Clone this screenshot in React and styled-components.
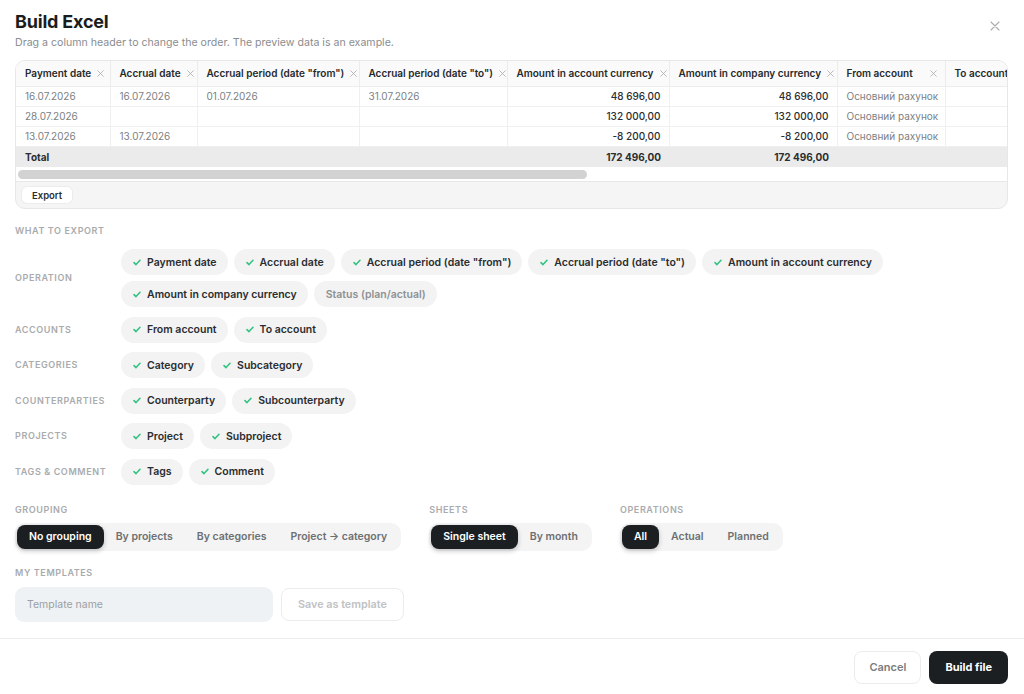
import React from "react";
import styled, { createGlobalStyle } from "styled-components";

const GlobalStyle = createGlobalStyle`
  html, body { margin: 0; padding: 0; background: #fff; }
  body { font-family: Inter, "Noto Sans", "Liberation Sans", sans-serif; color: #1c1f22; }
  * { box-sizing: border-box; }
`;

const columns = [
  { title: "Payment date", w: 94 },
  { title: "Accrual date", w: 87 },
  { title: 'Accrual period (date "from")', w: 162 },
  { title: 'Accrual period (date "to")', w: 148 },
  { title: "Amount in account currency", w: 162, num: true },
  { title: "Amount in company currency", w: 168, num: true },
  { title: "From account", w: 108 },
  { title: "To account", w: 120 },
];

const tableWidth = columns.reduce((s, c) => s + c.w, 0);

const rows = [
  ["16.07.2026", "16.07.2026", "01.07.2026", "31.07.2026", "48 696,00", "48 696,00", "Основний рахунок", ""],
  ["28.07.2026", "", "", "", "132 000,00", "132 000,00", "Основний рахунок", ""],
  ["13.07.2026", "13.07.2026", "", "", "-8 200,00", "-8 200,00", "Основний рахунок", ""],
];

const totals = ["Total", "", "", "", "172 496,00", "172 496,00", "", ""];

const groups = [
  {
    label: "Operation",
    chips: [
      ["Payment date", true],
      ["Accrual date", true],
      ['Accrual period (date "from")', true],
      ['Accrual period (date "to")', true],
      ["Amount in account currency", true],
      ["Amount in company currency", true],
      ["Status (plan/actual)", false],
    ],
  },
  { label: "Accounts", chips: [["From account", true], ["To account", true]] },
  { label: "Categories", chips: [["Category", true], ["Subcategory", true]] },
  { label: "Counterparties", chips: [["Counterparty", true], ["Subcounterparty", true]] },
  { label: "Projects", chips: [["Project", true], ["Subproject", true]] },
  { label: "Tags & comment", chips: [["Tags", true], ["Comment", true]] },
];

const Modal = styled.div`
  width: 1024px;
  height: 694px;
  display: flex;
  flex-direction: column;
  background: #fff;
  overflow: hidden;
`;

const Body = styled.div`
  padding: 11px 16px 0 15px;
  display: flex;
  flex-direction: column;
`;

const TitleRow = styled.div`
  display: flex;
  justify-content: space-between;
  align-items: flex-start;
`;

const Title = styled.h1`
  margin: 0;
  font-size: 18px;
  line-height: 22px;
  font-weight: 700;
  letter-spacing: -0.2px;
  color: #1a1d20;
`;

const Subtitle = styled.p`
  margin: 3px 0 0;
  font-size: 10.6px;
  line-height: 14px;
  color: #8a8d90;
`;

const CloseBtn = styled.button`
  border: 0;
  background: none;
  padding: 0;
  margin: 10px 8px 0 0;
  width: 10px;
  height: 10px;
  display: flex;
  color: #ababab;
`;

const TableCard = styled.div`
  margin-top: 10px;
  border: 1px solid #e7e7e7;
  border-radius: 10px;
  overflow: hidden;
  background: #f5f5f5;
`;

const TableClip = styled.div`
  overflow: hidden;
  background: #fff;
`;

const Table = styled.table`
  border-collapse: collapse;
  table-layout: fixed;
  font-size: 10px;
`;

const Th = styled.th`
  height: 25px;
  padding: 0 8px 0 9px;
  background: #fafafa;
  border-right: 1px solid #ececec;
  border-bottom: 1px solid #ececec;
  font-weight: 600;
  text-align: left;
  color: #26292c;
  white-space: nowrap;
  overflow: hidden;
`;

const ThInner = styled.div`
  display: flex;
  align-items: center;
  justify-content: space-between;
  gap: 6px;
`;

const Td = styled.td`
  height: 20px;
  padding: 0 8px 0 9px;
  border-right: 1px solid #f0f0f0;
  border-bottom: 1px solid #f0f0f0;
  white-space: nowrap;
  overflow: hidden;
  text-align: ${(p) => (p.$num ? "right" : "left")};
  color: ${(p) => (p.$num ? "#2b2e31" : "#7c7f82")};
  font-weight: ${(p) => (p.$num ? 500 : 400)};
`;

const TotalTd = styled.td`
  height: 21px;
  padding: 0 8px 0 9px;
  background: #ebebeb;
  font-weight: 700;
  color: #2b2e31;
  white-space: nowrap;
  text-align: ${(p) => (p.$num ? "right" : "left")};
`;

const ScrollTrack = styled.div`
  height: 15px;
  padding: 3px 2px;
  background: #fff;
  border-bottom: 1px solid #e8e8e8;
`;

const Thumb = styled.div`
  width: 569px;
  height: 9px;
  border-radius: 5px;
  background: #d2d2d2;
`;

const TableFooter = styled.div`
  height: 26px;
  padding: 4px 6px;
  display: flex;
  align-items: center;
`;

const SmallBtn = styled.button`
  height: 16px;
  padding: 0 10px;
  border: 0;
  border-radius: 5px;
  background: #fff;
  box-shadow: 0 0 0 1px #ececec;
  font: 600 9.5px Inter, sans-serif;
  color: #2b2e31;
`;

const SectionLabel = styled.div`
  font-size: 9px;
  line-height: 12px;
  font-weight: 600;
  letter-spacing: 0.6px;
  text-transform: uppercase;
  color: #a9abad;
`;

const ExportHead = styled(SectionLabel)`
  margin-top: 16px;
`;

const GroupList = styled.div`
  margin-top: 12px;
  display: flex;
  flex-direction: column;
  gap: 9.5px;
`;

const GroupRow = styled.div`
  display: grid;
  grid-template-columns: 106px 1fr;
  align-items: center;
`;

const ChipWrap = styled.div`
  display: flex;
  flex-wrap: wrap;
  gap: 6px;
`;

const Chip = styled.button`
  height: 26px;
  padding: 0 11px 0 12px;
  border: 0;
  border-radius: 13px;
  background: #f3f3f3;
  display: flex;
  align-items: center;
  gap: 6px;
  font: 600 10.5px Inter, sans-serif;
  color: ${(p) => (p.$on ? "#2a2d30" : "#8e9194")};
`;

const ModesRow = styled.div`
  margin-top: 19px;
  display: flex;
  gap: 28px;
`;

const ModeBlock = styled.div`
  display: flex;
  flex-direction: column;
  gap: 7px;
`;

const Segmented = styled.div`
  display: flex;
  padding: 2px;
  border-radius: 10px;
  background: #f4f4f4;
`;

const Segment = styled.button`
  height: 24px;
  padding: 0 12px;
  border: 0;
  border-radius: 8px;
  font: 600 10.5px Inter, sans-serif;
  background: ${(p) => (p.$active ? "#1b1f22" : "transparent")};
  color: ${(p) => (p.$active ? "#fff" : "#6d7073")};
  box-shadow: ${(p) => (p.$active ? "0 2px 5px rgba(0,0,0,0.22)" : "none")};
`;

const TemplatesHead = styled(SectionLabel)`
  margin-top: 16px;
`;

const TemplateRow = styled.div`
  margin-top: 8px;
  display: flex;
  align-items: center;
  gap: 8px;
`;

const TemplateInput = styled.input`
  width: 258px;
  height: 35px;
  padding: 0 12px;
  border: 0;
  border-radius: 9px;
  background: #eef2f4;
  font: 400 10.5px Inter, sans-serif;
  outline: none;
  &::placeholder { color: #9c9fa2; }
`;

const GhostBtn = styled.button`
  height: 33px;
  padding: 0 ${(p) => (p.$wide ? 16 : 14)}px;
  border: 1px solid #ececec;
  border-radius: 8px;
  background: #fff;
  font: 600 ${(p) => (p.$wide ? 10.8 : 11)}px Inter, sans-serif;
  color: ${(p) => (p.$disabled ? "#c0c2c4" : "#7a7d80")};
`;

const Divider = styled.div`
  margin-top: 16px;
  height: 1px;
  background: #ededed;
`;

const Footer = styled.div`
  padding: 12px 16px 0;
  display: flex;
  justify-content: flex-end;
  gap: 8px;
`;

const PrimaryBtn = styled.button`
  height: 33px;
  padding: 0 16px;
  border: 0;
  border-radius: 8px;
  background: #1b1f22;
  color: #fff;
  font: 700 11px Inter, sans-serif;
`;

const XSmall = styled.span`
  display: flex;
  color: #a8a8a8;
  flex: none;
`;

function Cross({ size = 7 }) {
  return (
    <svg width={size} height={size} viewBox="0 0 10 10" fill="none">
      <path d="M1 1l8 8M9 1L1 9" stroke="currentColor" strokeWidth="1.1" strokeLinecap="round" />
    </svg>
  );
}

function Check() {
  return (
    <svg width="8" height="7" viewBox="0 0 8 7" fill="none">
      <path d="M1 3.6l2 2L7 1.2" stroke="#2ec27e" strokeWidth="1.5" strokeLinecap="round" strokeLinejoin="round" />
    </svg>
  );
}

function SegGroup({ label, items, active }) {
  return (
    <ModeBlock>
      <SectionLabel>{label}</SectionLabel>
      <Segmented>
        {items.map((it) => (
          <Segment key={it} $active={it === active}>
            {it}
          </Segment>
        ))}
      </Segmented>
    </ModeBlock>
  );
}

export default function App() {
  return (
    <>
      <GlobalStyle />
      <Modal>
        <Body>
          <TitleRow>
            <div>
              <Title>Build Excel</Title>
              <Subtitle>Drag a column header to change the order. The preview data is an example.</Subtitle>
            </div>
            <CloseBtn>
              <svg width="10" height="10" viewBox="0 0 10 10" fill="none">
                <path d="M1 1l8 8M9 1L1 9" stroke="currentColor" strokeWidth="1.1" strokeLinecap="round" />
              </svg>
            </CloseBtn>
          </TitleRow>

          <TableCard>
            <TableClip>
              <Table style={{ width: tableWidth }}>
                <colgroup>
                  {columns.map((c) => (
                    <col key={c.title} style={{ width: c.w }} />
                  ))}
                </colgroup>
                <thead>
                  <tr>
                    {columns.map((c, i) => (
                      <Th key={c.title}>
                        <ThInner>
                          <span>{c.title}</span>
                          {i < columns.length - 1 && (
                            <XSmall>
                              <Cross />
                            </XSmall>
                          )}
                        </ThInner>
                      </Th>
                    ))}
                  </tr>
                </thead>
                <tbody>
                  {rows.map((r, ri) => (
                    <tr key={ri}>
                      {r.map((v, ci) => (
                        <Td key={ci} $num={columns[ci].num}>
                          {v}
                        </Td>
                      ))}
                    </tr>
                  ))}
                  <tr>
                    {totals.map((v, ci) => (
                      <TotalTd key={ci} $num={columns[ci].num}>
                        {v}
                      </TotalTd>
                    ))}
                  </tr>
                </tbody>
              </Table>
              <ScrollTrack>
                <Thumb />
              </ScrollTrack>
            </TableClip>
            <TableFooter>
              <SmallBtn>Export</SmallBtn>
            </TableFooter>
          </TableCard>

          <ExportHead>What to export</ExportHead>
          <GroupList>
            {groups.map((g) => (
              <GroupRow key={g.label}>
                <SectionLabel>{g.label}</SectionLabel>
                <ChipWrap>
                  {g.chips.map(([name, on]) => (
                    <Chip key={name} $on={on}>
                      {on && <Check />}
                      {name}
                    </Chip>
                  ))}
                </ChipWrap>
              </GroupRow>
            ))}
          </GroupList>

          <ModesRow>
            <SegGroup
              label="Grouping"
              items={["No grouping", "By projects", "By categories", "Project → category"]}
              active="No grouping"
            />
            <SegGroup label="Sheets" items={["Single sheet", "By month"]} active="Single sheet" />
            <SegGroup label="Operations" items={["All", "Actual", "Planned"]} active="All" />
          </ModesRow>

          <TemplatesHead>My templates</TemplatesHead>
          <TemplateRow>
            <TemplateInput placeholder="Template name" />
            <GhostBtn $disabled $wide>Save as template</GhostBtn>
          </TemplateRow>
        </Body>
        <Divider />
        <Footer>
          <GhostBtn>Cancel</GhostBtn>
          <PrimaryBtn>Build file</PrimaryBtn>
        </Footer>
      </Modal>
    </>
  );
}
